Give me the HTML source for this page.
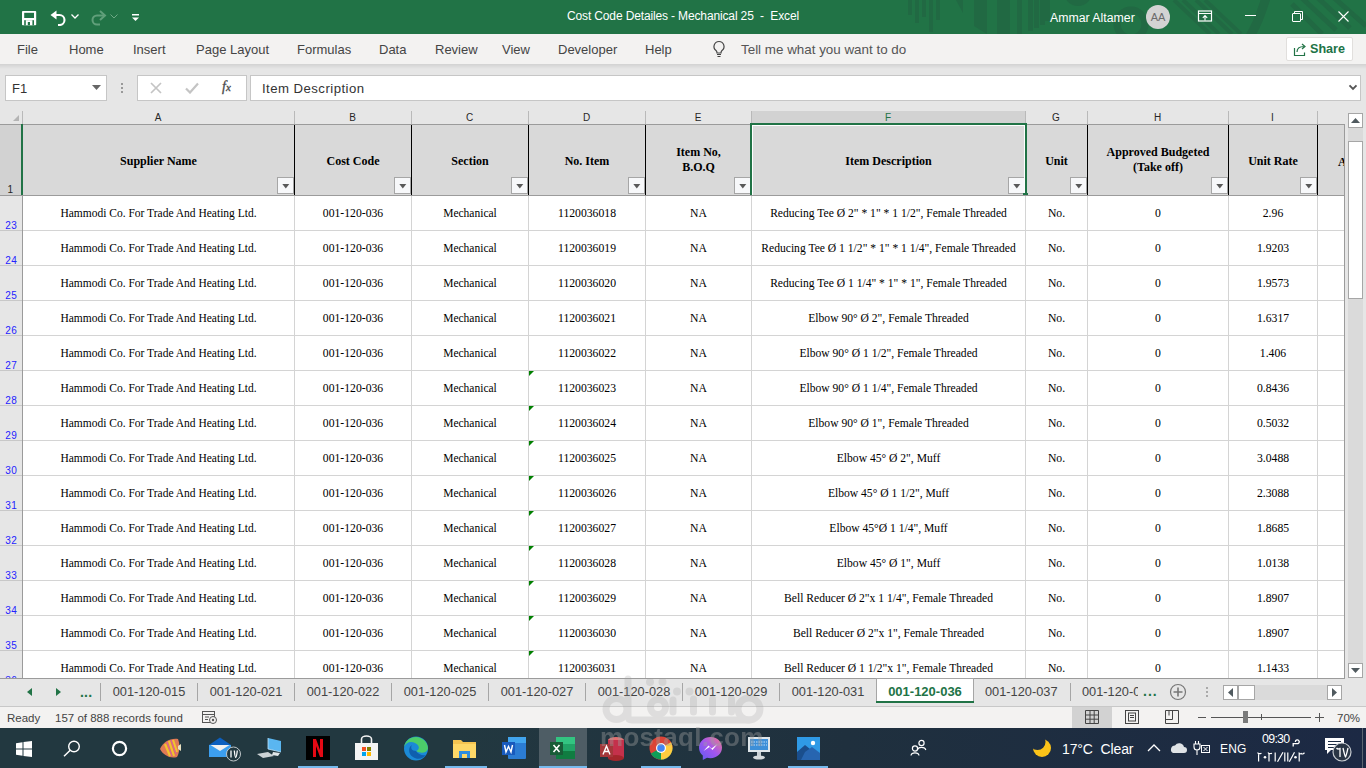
<!DOCTYPE html>
<html><head><meta charset="utf-8"><title>Excel</title>
<style>
*{box-sizing:border-box;margin:0;padding:0}
html,body{width:1366px;height:768px;overflow:hidden;background:#fff}
body{position:relative;font-family:"Liberation Sans",sans-serif;}
.a{position:absolute}
.t{position:absolute;white-space:nowrap}
.serif{font-family:"Liberation Serif",serif}
</style></head><body>
<div class="a" style="left:0;top:0;width:1366px;height:34px;background:#217346;overflow:hidden"><svg class="a" style="left:0;top:0" width="1366" height="34" viewBox="0 0 1366 34">
<g fill="#216943">
<rect x="908" y="0" width="4" height="15"/><rect x="915" y="0" width="4" height="23"/><rect x="922" y="0" width="4" height="17"/><rect x="929" y="0" width="4" height="32"/><rect x="936" y="0" width="4" height="20"/>
<path d="M956 0H963V13z"/>
<path d="M974 0H987V34L974 26z"/>
<rect x="997" y="0" width="13" height="34"/>
<rect x="1017" y="0" width="5" height="34"/><rect x="1028" y="0" width="5" height="31"/><rect x="1034" y="0" width="5" height="28"/><rect x="1040" y="0" width="5" height="25"/><rect x="1045" y="0" width="5" height="21"/>
<circle cx="1078" cy="-8" r="14"/>
</g>
<g fill="none" stroke="#216943">
<circle cx="1131" cy="24" r="14" stroke-width="7"/>
<path d="M1174 0 L1210 34 M1183 0 L1219 34 M1196 0 L1232 34 M1205 0 L1241 34" stroke-width="4"/>
<path d="M1266 -2 C1262 10 1258 24 1250 36" stroke-width="9"/>
<path d="M1292 4 L1322 34 M1302 -2 L1336 30 M1316 -4 L1350 28 M1332 -4 L1366 26" stroke-width="5"/>
</g>
</svg><svg class="a" style="left:22px;top:11px" width="15" height="15" viewBox="0 0 15 15">
<rect x="0" y="0" width="14.2" height="14.2" rx="0.8" fill="#fff"/>
<rect x="2.2" y="1.8" width="9.8" height="5.2" fill="#217346"/>
<rect x="2.2" y="9.2" width="9.8" height="5" fill="#217346"/>
<rect x="3.8" y="9.2" width="6.6" height="5" fill="#fff"/>
<rect x="5.8" y="11" width="2.2" height="3.2" fill="#217346"/>
</svg><svg class="a" style="left:50px;top:10px" width="17" height="16" viewBox="0 0 17 16">
<path d="M0.5 5 L6.5 0.5 V9.5z" fill="#fff"/>
<path d="M4 5 H9.5 a5 5 0 0 1 0 10 H8" fill="none" stroke="#fff" stroke-width="2.1"/>
</svg><svg class="a" style="left:71px;top:14px" width="8" height="5" viewBox="0 0 8 5"><path d="M0.5 0.5 L4 4 L7.5 0.5" fill="none" stroke="#fff" stroke-width="1.3"/></svg><svg class="a" style="left:89px;top:9px" width="18" height="17" viewBox="0 0 18 17">
<path d="M11 2 L16 6.5 L11 11" fill="none" stroke="#609f7a" stroke-width="2"/>
<path d="M15.5 6.5 H8 a4.5 4.5 0 0 0 0 9 H11" fill="none" stroke="#609f7a" stroke-width="2"/>
</svg><svg class="a" style="left:110px;top:14px" width="8" height="5" viewBox="0 0 8 5"><path d="M0.5 0.5 L4 4 L7.5 0.5" fill="none" stroke="#6ea985" stroke-width="1"/></svg><svg class="a" style="left:131px;top:13px" width="9" height="9" viewBox="0 0 9 9"><rect x="1" y="1" width="7" height="1.5" fill="#fff"/><path d="M1 4.5 H8 L4.5 8z" fill="#fff"/></svg><div class="t" style="left:567px;top:9px;font-size:12px;color:#fff;letter-spacing:-0.14px">Cost Code Detailes - Mechanical 25 &nbsp;- &nbsp;Excel</div><div class="t" style="left:1050px;top:11px;font-size:12.3px;color:#fff">Ammar Altamer</div><div class="a" style="left:1146px;top:5px;width:24px;height:24px;border-radius:50%;background:#d3d3d3"></div><div class="t" style="left:1146px;top:11px;width:24px;text-align:center;font-size:11px;color:#6b6b6b">AA</div><svg class="a" style="left:1197px;top:10px" width="16" height="12" viewBox="0 0 16 12">
<rect x="1.5" y="1" width="13" height="10" fill="none" stroke="#fff" stroke-width="1.2"/>
<path d="M1.5 3.5h13" stroke="#fff" stroke-width="1"/>
<path d="M8 10.5V5.5 M5.8 7.8 L8 5.5 L10.2 7.8" fill="none" stroke="#fff" stroke-width="1.1"/>
</svg><div class="a" style="left:1245px;top:15px;width:11px;height:1px;background:#fff"></div><svg class="a" style="left:1292px;top:11px" width="11" height="11" viewBox="0 0 11 11">
<rect x="0.5" y="2.5" width="8" height="8" rx="0.5" fill="none" stroke="#fff" stroke-width="1"/>
<path d="M2.5 2.5V0.5h8v8h-2" fill="none" stroke="#fff" stroke-width="1"/>
</svg><svg class="a" style="left:1338px;top:11px" width="11" height="11" viewBox="0 0 11 11"><path d="M0.5 0.5L10.5 10.5M10.5 0.5L0.5 10.5" stroke="#fff" stroke-width="1.1"/></svg></div><div class="a" style="left:0;top:34px;width:1366px;height:30px;background:#f3f2f1"></div><div class="t" style="left:17px;top:42px;font-size:13px;color:#444">File</div><div class="t" style="left:69px;top:42px;font-size:13px;color:#444">Home</div><div class="t" style="left:133px;top:42px;font-size:13px;color:#444">Insert</div><div class="t" style="left:196px;top:42px;font-size:13px;color:#444">Page Layout</div><div class="t" style="left:297px;top:42px;font-size:13px;color:#444">Formulas</div><div class="t" style="left:379px;top:42px;font-size:13px;color:#444">Data</div><div class="t" style="left:435px;top:42px;font-size:13px;color:#444">Review</div><div class="t" style="left:502px;top:42px;font-size:13px;color:#444">View</div><div class="t" style="left:558px;top:42px;font-size:13px;color:#444">Developer</div><div class="t" style="left:645px;top:42px;font-size:13px;color:#444">Help</div><svg class="a" style="left:711px;top:40px" width="16" height="18" viewBox="0 0 16 18">
<path d="M8 1.5a5 5 0 0 0-3 9c.8.7 1 1.5 1 2.5h4c0-1 .2-1.8 1-2.5a5 5 0 0 0-3-9z" fill="none" stroke="#444" stroke-width="1.2"/>
<path d="M6 14.5h4M6.5 16.5h3" stroke="#444" stroke-width="1.2"/>
</svg><div class="t" style="left:741px;top:42px;font-size:13.4px;color:#555">Tell me what you want to do</div><div class="a" style="left:1286px;top:37px;width:67px;height:24px;background:#fff;border:1px solid #e1dfdd;border-radius:2px"></div><svg class="a" style="left:1293px;top:42px" width="15" height="15" viewBox="0 0 15 15">
<path d="M1.5 6v7.5h10v-3" fill="none" stroke="#217346" stroke-width="1.2"/>
<path d="M4 10c0-4 3-5.5 7-5.5M9 2l3 2.5-3 2.5" fill="none" stroke="#217346" stroke-width="1.2"/>
</svg><div class="t" style="left:1310px;top:42px;font-size:12.6px;font-weight:bold;color:#217346">Share</div><div class="a" style="left:0;top:64px;width:1366px;height:47px;background:#e6e6e6"></div><div class="a" style="left:0;top:64px;width:1366px;height:5px;background:linear-gradient(#d2d2d2,#e6e6e6)"></div><div class="a" style="left:5px;top:75px;width:102px;height:26px;background:#fff;border:1px solid #c6c6c6"></div><div class="t" style="left:12px;top:81px;font-size:13px;color:#333">F1</div><svg class="a" style="left:92px;top:85px" width="9" height="5" viewBox="0 0 9 5"><path d="M0 0h9L4.5 5z" fill="#666"/></svg><div class="a" style="left:121px;top:83px;width:2px;height:2px;background:#999"></div><div class="a" style="left:121px;top:87px;width:2px;height:2px;background:#999"></div><div class="a" style="left:121px;top:91px;width:2px;height:2px;background:#999"></div><div class="a" style="left:137px;top:75px;width:110px;height:26px;background:#fff;border:1px solid #c6c6c6"></div><svg class="a" style="left:150px;top:82px" width="12" height="12" viewBox="0 0 12 12"><path d="M1 1L11 11M11 1L1 11" stroke="#c4c4c4" stroke-width="1.7"/></svg><svg class="a" style="left:185px;top:82px" width="14" height="12" viewBox="0 0 14 12"><path d="M1 6.5L5 10.5L13 1.5" fill="none" stroke="#c4c4c4" stroke-width="2.2"/></svg><div class="t serif" style="left:222px;top:79px;font-size:14px;font-style:italic;color:#4a4a4a;-webkit-text-stroke:0.3px #4a4a4a">f<span style="font-size:11px">x</span></div><div class="a" style="left:250px;top:75px;width:1111px;height:26px;background:#fff;border:1px solid #c6c6c6"></div><div class="t" style="left:262px;top:81px;font-size:13.2px;letter-spacing:0.45px;color:#333">Item Description</div><svg class="a" style="left:1348px;top:84px" width="10" height="7" viewBox="0 0 10 7"><path d="M1.5 1.3L5 4.8L8.5 1.3" fill="none" stroke="#555" stroke-width="1.9"/></svg><div class="a" style="left:0;top:111px;width:1345px;height:13px;background:#e6e6e6"></div><div class="a" style="left:752px;top:111px;width:273px;height:13px;background:#d2d2d2"></div><svg class="a" style="left:13px;top:115px" width="7" height="7" viewBox="0 0 7 7"><path d="M6 0V6H0z" fill="#b4b4b4"/></svg><div class="t" style="left:22px;top:111px;width:272px;text-align:center;font-size:10px;line-height:13px;color:#262626">A</div><div class="t" style="left:294px;top:111px;width:117px;text-align:center;font-size:10px;line-height:13px;color:#262626">B</div><div class="t" style="left:411px;top:111px;width:117px;text-align:center;font-size:10px;line-height:13px;color:#262626">C</div><div class="t" style="left:528px;top:111px;width:117px;text-align:center;font-size:10px;line-height:13px;color:#262626">D</div><div class="t" style="left:645px;top:111px;width:106px;text-align:center;font-size:10px;line-height:13px;color:#262626">E</div><div class="t" style="left:751px;top:111px;width:274px;text-align:center;font-size:10px;line-height:13px;color:#217346">F</div><div class="t" style="left:1025px;top:111px;width:62px;text-align:center;font-size:10px;line-height:13px;color:#262626">G</div><div class="t" style="left:1087px;top:111px;width:141px;text-align:center;font-size:10px;line-height:13px;color:#262626">H</div><div class="t" style="left:1228px;top:111px;width:89px;text-align:center;font-size:10px;line-height:13px;color:#262626">I</div><div class="t" style="left:1317px;top:111px;width:27px;text-align:center;font-size:10px;line-height:13px;color:#262626"></div><div class="a" style="left:22px;top:111px;width:1px;height:13px;background:#b9b9b9"></div><div class="a" style="left:294px;top:111px;width:1px;height:13px;background:#b9b9b9"></div><div class="a" style="left:411px;top:111px;width:1px;height:13px;background:#b9b9b9"></div><div class="a" style="left:528px;top:111px;width:1px;height:13px;background:#b9b9b9"></div><div class="a" style="left:645px;top:111px;width:1px;height:13px;background:#b9b9b9"></div><div class="a" style="left:751px;top:111px;width:1px;height:13px;background:#b9b9b9"></div><div class="a" style="left:1025px;top:111px;width:1px;height:13px;background:#b9b9b9"></div><div class="a" style="left:1087px;top:111px;width:1px;height:13px;background:#b9b9b9"></div><div class="a" style="left:1228px;top:111px;width:1px;height:13px;background:#b9b9b9"></div><div class="a" style="left:1317px;top:111px;width:1px;height:13px;background:#b9b9b9"></div><div class="a" style="left:0;top:124px;width:1345px;height:1px;background:#9b9b9b"></div><div class="a" style="left:0;top:125px;width:22px;height:553px;background:#e6e6e6"></div><div class="a" style="left:0;top:125px;width:21px;height:70px;background:#d2d2d2"></div><div class="a" style="left:22px;top:125px;width:1px;height:553px;background:#9b9b9b"></div><div class="a" style="left:21px;top:124px;width:2px;height:71px;background:#217346"></div><div class="t" style="left:0;top:184px;width:13px;text-align:right;font-size:10px;color:#262626">1</div><div class="a" style="left:0;top:230px;width:22px;height:1px;background:#c8c8c8"></div><div class="t" style="left:0;top:220px;width:17px;text-align:right;font-size:10px;letter-spacing:0.3px;color:#2323ff;line-height:12px">23</div><div class="a" style="left:0;top:265px;width:22px;height:1px;background:#c8c8c8"></div><div class="t" style="left:0;top:255px;width:17px;text-align:right;font-size:10px;letter-spacing:0.3px;color:#2323ff;line-height:12px">24</div><div class="a" style="left:0;top:300px;width:22px;height:1px;background:#c8c8c8"></div><div class="t" style="left:0;top:290px;width:17px;text-align:right;font-size:10px;letter-spacing:0.3px;color:#2323ff;line-height:12px">25</div><div class="a" style="left:0;top:335px;width:22px;height:1px;background:#c8c8c8"></div><div class="t" style="left:0;top:325px;width:17px;text-align:right;font-size:10px;letter-spacing:0.3px;color:#2323ff;line-height:12px">26</div><div class="a" style="left:0;top:370px;width:22px;height:1px;background:#c8c8c8"></div><div class="t" style="left:0;top:360px;width:17px;text-align:right;font-size:10px;letter-spacing:0.3px;color:#2323ff;line-height:12px">27</div><div class="a" style="left:0;top:405px;width:22px;height:1px;background:#c8c8c8"></div><div class="t" style="left:0;top:395px;width:17px;text-align:right;font-size:10px;letter-spacing:0.3px;color:#2323ff;line-height:12px">28</div><div class="a" style="left:0;top:440px;width:22px;height:1px;background:#c8c8c8"></div><div class="t" style="left:0;top:430px;width:17px;text-align:right;font-size:10px;letter-spacing:0.3px;color:#2323ff;line-height:12px">29</div><div class="a" style="left:0;top:475px;width:22px;height:1px;background:#c8c8c8"></div><div class="t" style="left:0;top:465px;width:17px;text-align:right;font-size:10px;letter-spacing:0.3px;color:#2323ff;line-height:12px">30</div><div class="a" style="left:0;top:510px;width:22px;height:1px;background:#c8c8c8"></div><div class="t" style="left:0;top:500px;width:17px;text-align:right;font-size:10px;letter-spacing:0.3px;color:#2323ff;line-height:12px">31</div><div class="a" style="left:0;top:545px;width:22px;height:1px;background:#c8c8c8"></div><div class="t" style="left:0;top:535px;width:17px;text-align:right;font-size:10px;letter-spacing:0.3px;color:#2323ff;line-height:12px">32</div><div class="a" style="left:0;top:580px;width:22px;height:1px;background:#c8c8c8"></div><div class="t" style="left:0;top:570px;width:17px;text-align:right;font-size:10px;letter-spacing:0.3px;color:#2323ff;line-height:12px">33</div><div class="a" style="left:0;top:615px;width:22px;height:1px;background:#c8c8c8"></div><div class="t" style="left:0;top:605px;width:17px;text-align:right;font-size:10px;letter-spacing:0.3px;color:#2323ff;line-height:12px">34</div><div class="a" style="left:0;top:650px;width:22px;height:1px;background:#c8c8c8"></div><div class="t" style="left:0;top:640px;width:17px;text-align:right;font-size:10px;letter-spacing:0.3px;color:#2323ff;line-height:12px">35</div><div class="a" style="left:0;top:685px;width:22px;height:1px;background:#c8c8c8"></div><div class="t" style="left:0;top:675px;width:17px;text-align:right;font-size:10px;letter-spacing:0.3px;color:#2323ff;line-height:12px">36</div><div class="a" style="left:23px;top:125px;width:1321px;height:70px;background:#d9d9d9"></div><div class="t serif" style="left:23px;top:154px;width:271px;text-align:center;font-size:12px;font-weight:bold;color:#000;line-height:15px">Supplier Name</div><div class="a" style="left:277px;top:177px;width:17px;height:17px;background:#f7f8fa;border:1px solid #a6a6a6"></div><svg class="a" style="left:282px;top:184px" width="8" height="5" viewBox="0 0 8 5"><path d="M0.3 0H7.3L3.8 4.5z" fill="#595959"/></svg><div class="t serif" style="left:295px;top:154px;width:116px;text-align:center;font-size:12px;font-weight:bold;color:#000;line-height:15px">Cost Code</div><div class="a" style="left:394px;top:177px;width:17px;height:17px;background:#f7f8fa;border:1px solid #a6a6a6"></div><svg class="a" style="left:399px;top:184px" width="8" height="5" viewBox="0 0 8 5"><path d="M0.3 0H7.3L3.8 4.5z" fill="#595959"/></svg><div class="t serif" style="left:412px;top:154px;width:116px;text-align:center;font-size:12px;font-weight:bold;color:#000;line-height:15px">Section</div><div class="a" style="left:511px;top:177px;width:17px;height:17px;background:#f7f8fa;border:1px solid #a6a6a6"></div><svg class="a" style="left:516px;top:184px" width="8" height="5" viewBox="0 0 8 5"><path d="M0.3 0H7.3L3.8 4.5z" fill="#595959"/></svg><div class="t serif" style="left:529px;top:154px;width:116px;text-align:center;font-size:12px;font-weight:bold;color:#000;line-height:15px">No. Item</div><div class="a" style="left:628px;top:177px;width:17px;height:17px;background:#f7f8fa;border:1px solid #a6a6a6"></div><svg class="a" style="left:633px;top:184px" width="8" height="5" viewBox="0 0 8 5"><path d="M0.3 0H7.3L3.8 4.5z" fill="#595959"/></svg><div class="t serif" style="left:646px;top:145px;width:105px;text-align:center;font-size:12px;font-weight:bold;color:#000;line-height:15px">Item No,<br>B.O.Q</div><div class="a" style="left:734px;top:177px;width:17px;height:17px;background:#f7f8fa;border:1px solid #a6a6a6"></div><svg class="a" style="left:739px;top:184px" width="8" height="5" viewBox="0 0 8 5"><path d="M0.3 0H7.3L3.8 4.5z" fill="#595959"/></svg><div class="t serif" style="left:752px;top:154px;width:273px;text-align:center;font-size:12px;font-weight:bold;color:#000;line-height:15px">Item Description</div><div class="a" style="left:1008px;top:177px;width:17px;height:17px;background:#f7f8fa;border:1px solid #a6a6a6"></div><svg class="a" style="left:1013px;top:184px" width="8" height="5" viewBox="0 0 8 5"><path d="M0.3 0H7.3L3.8 4.5z" fill="#595959"/></svg><div class="t serif" style="left:1026px;top:154px;width:61px;text-align:center;font-size:12px;font-weight:bold;color:#000;line-height:15px">Unit</div><div class="a" style="left:1070px;top:177px;width:17px;height:17px;background:#f7f8fa;border:1px solid #a6a6a6"></div><svg class="a" style="left:1075px;top:184px" width="8" height="5" viewBox="0 0 8 5"><path d="M0.3 0H7.3L3.8 4.5z" fill="#595959"/></svg><div class="t serif" style="left:1088px;top:145px;width:140px;text-align:center;font-size:12px;font-weight:bold;color:#000;line-height:15px">Approved Budgeted<br>(Take off)</div><div class="a" style="left:1211px;top:177px;width:17px;height:17px;background:#f7f8fa;border:1px solid #a6a6a6"></div><svg class="a" style="left:1216px;top:184px" width="8" height="5" viewBox="0 0 8 5"><path d="M0.3 0H7.3L3.8 4.5z" fill="#595959"/></svg><div class="t serif" style="left:1229px;top:154px;width:88px;text-align:center;font-size:12px;font-weight:bold;color:#000;line-height:15px">Unit Rate</div><div class="a" style="left:1300px;top:177px;width:17px;height:17px;background:#f7f8fa;border:1px solid #a6a6a6"></div><svg class="a" style="left:1305px;top:184px" width="8" height="5" viewBox="0 0 8 5"><path d="M0.3 0H7.3L3.8 4.5z" fill="#595959"/></svg><div class="t serif" style="left:1338px;top:155px;font-size:12px;font-weight:bold;color:#000;line-height:15px">A</div><div class="a" style="left:294px;top:125px;width:1px;height:70px;background:#000"></div><div class="a" style="left:411px;top:125px;width:1px;height:70px;background:#000"></div><div class="a" style="left:528px;top:125px;width:1px;height:70px;background:#000"></div><div class="a" style="left:645px;top:125px;width:1px;height:70px;background:#000"></div><div class="a" style="left:751px;top:125px;width:1px;height:70px;background:#000"></div><div class="a" style="left:1025px;top:125px;width:1px;height:70px;background:#000"></div><div class="a" style="left:1087px;top:125px;width:1px;height:70px;background:#000"></div><div class="a" style="left:1228px;top:125px;width:1px;height:70px;background:#000"></div><div class="a" style="left:1317px;top:125px;width:1px;height:70px;background:#000"></div><div class="a" style="left:1344px;top:124px;width:1px;height:555px;background:#9b9b9b"></div><div class="a" style="left:0;top:195px;width:1345px;height:1px;background:#9b9b9b"></div><div class="a" style="left:23px;top:196px;width:1321px;height:482px;background:#fff"></div><div class="a" style="left:23px;top:230px;width:1321px;height:1px;background:#d4d4d4"></div><div class="a" style="left:23px;top:265px;width:1321px;height:1px;background:#d4d4d4"></div><div class="a" style="left:23px;top:300px;width:1321px;height:1px;background:#d4d4d4"></div><div class="a" style="left:23px;top:335px;width:1321px;height:1px;background:#d4d4d4"></div><div class="a" style="left:23px;top:370px;width:1321px;height:1px;background:#d4d4d4"></div><div class="a" style="left:23px;top:405px;width:1321px;height:1px;background:#d4d4d4"></div><div class="a" style="left:23px;top:440px;width:1321px;height:1px;background:#d4d4d4"></div><div class="a" style="left:23px;top:475px;width:1321px;height:1px;background:#d4d4d4"></div><div class="a" style="left:23px;top:510px;width:1321px;height:1px;background:#d4d4d4"></div><div class="a" style="left:23px;top:545px;width:1321px;height:1px;background:#d4d4d4"></div><div class="a" style="left:23px;top:580px;width:1321px;height:1px;background:#d4d4d4"></div><div class="a" style="left:23px;top:615px;width:1321px;height:1px;background:#d4d4d4"></div><div class="a" style="left:23px;top:650px;width:1321px;height:1px;background:#d4d4d4"></div><div class="a" style="left:23px;top:685px;width:1321px;height:1px;background:#d4d4d4"></div><div class="a" style="left:294px;top:196px;width:1px;height:482px;background:#d4d4d4"></div><div class="a" style="left:411px;top:196px;width:1px;height:482px;background:#d4d4d4"></div><div class="a" style="left:528px;top:196px;width:1px;height:482px;background:#d4d4d4"></div><div class="a" style="left:645px;top:196px;width:1px;height:482px;background:#d4d4d4"></div><div class="a" style="left:751px;top:196px;width:1px;height:482px;background:#d4d4d4"></div><div class="a" style="left:1025px;top:196px;width:1px;height:482px;background:#d4d4d4"></div><div class="a" style="left:1087px;top:196px;width:1px;height:482px;background:#d4d4d4"></div><div class="a" style="left:1228px;top:196px;width:1px;height:482px;background:#d4d4d4"></div><div class="a" style="left:1317px;top:196px;width:1px;height:482px;background:#d4d4d4"></div><div class="t serif" style="left:23px;top:206px;width:271px;text-align:center;font-size:11.5px;color:#000;line-height:15px">Hammodi Co. For Trade And Heating Ltd.</div><div class="t serif" style="left:295px;top:206px;width:116px;text-align:center;font-size:11.7px;color:#000;line-height:15px">001-120-036</div><div class="t serif" style="left:412px;top:206px;width:116px;text-align:center;font-size:11.5px;color:#000;line-height:15px">Mechanical</div><div class="t serif" style="left:529px;top:206px;width:116px;text-align:center;font-size:11.7px;color:#000;line-height:15px">1120036018</div><div class="t serif" style="left:646px;top:206px;width:105px;text-align:center;font-size:11.7px;color:#000;line-height:15px">NA</div><div class="t serif" style="left:752px;top:206px;width:273px;text-align:center;font-size:11.6px;color:#000;line-height:15px">Reducing Tee Ø 2&quot; * 1&quot; * 1 1/2&quot;, Female Threaded</div><div class="t serif" style="left:1026px;top:206px;width:61px;text-align:center;font-size:11.7px;color:#000;line-height:15px">No.</div><div class="t serif" style="left:1088px;top:206px;width:140px;text-align:center;font-size:11.7px;color:#000;line-height:15px">0</div><div class="t serif" style="left:1229px;top:206px;width:88px;text-align:center;font-size:11.7px;color:#000;line-height:15px">2.96</div><div class="t serif" style="left:23px;top:241px;width:271px;text-align:center;font-size:11.5px;color:#000;line-height:15px">Hammodi Co. For Trade And Heating Ltd.</div><div class="t serif" style="left:295px;top:241px;width:116px;text-align:center;font-size:11.7px;color:#000;line-height:15px">001-120-036</div><div class="t serif" style="left:412px;top:241px;width:116px;text-align:center;font-size:11.5px;color:#000;line-height:15px">Mechanical</div><div class="t serif" style="left:529px;top:241px;width:116px;text-align:center;font-size:11.7px;color:#000;line-height:15px">1120036019</div><div class="t serif" style="left:646px;top:241px;width:105px;text-align:center;font-size:11.7px;color:#000;line-height:15px">NA</div><div class="t serif" style="left:752px;top:241px;width:273px;text-align:center;font-size:11.6px;color:#000;line-height:15px">Reducing Tee Ø 1 1/2&quot; * 1&quot; * 1 1/4&quot;, Female Threaded</div><div class="t serif" style="left:1026px;top:241px;width:61px;text-align:center;font-size:11.7px;color:#000;line-height:15px">No.</div><div class="t serif" style="left:1088px;top:241px;width:140px;text-align:center;font-size:11.7px;color:#000;line-height:15px">0</div><div class="t serif" style="left:1229px;top:241px;width:88px;text-align:center;font-size:11.7px;color:#000;line-height:15px">1.9203</div><div class="t serif" style="left:23px;top:276px;width:271px;text-align:center;font-size:11.5px;color:#000;line-height:15px">Hammodi Co. For Trade And Heating Ltd.</div><div class="t serif" style="left:295px;top:276px;width:116px;text-align:center;font-size:11.7px;color:#000;line-height:15px">001-120-036</div><div class="t serif" style="left:412px;top:276px;width:116px;text-align:center;font-size:11.5px;color:#000;line-height:15px">Mechanical</div><div class="t serif" style="left:529px;top:276px;width:116px;text-align:center;font-size:11.7px;color:#000;line-height:15px">1120036020</div><div class="t serif" style="left:646px;top:276px;width:105px;text-align:center;font-size:11.7px;color:#000;line-height:15px">NA</div><div class="t serif" style="left:752px;top:276px;width:273px;text-align:center;font-size:11.6px;color:#000;line-height:15px">Reducing Tee Ø 1 1/4&quot; * 1&quot; * 1&quot;, Female Threaded</div><div class="t serif" style="left:1026px;top:276px;width:61px;text-align:center;font-size:11.7px;color:#000;line-height:15px">No.</div><div class="t serif" style="left:1088px;top:276px;width:140px;text-align:center;font-size:11.7px;color:#000;line-height:15px">0</div><div class="t serif" style="left:1229px;top:276px;width:88px;text-align:center;font-size:11.7px;color:#000;line-height:15px">1.9573</div><div class="t serif" style="left:23px;top:311px;width:271px;text-align:center;font-size:11.5px;color:#000;line-height:15px">Hammodi Co. For Trade And Heating Ltd.</div><div class="t serif" style="left:295px;top:311px;width:116px;text-align:center;font-size:11.7px;color:#000;line-height:15px">001-120-036</div><div class="t serif" style="left:412px;top:311px;width:116px;text-align:center;font-size:11.5px;color:#000;line-height:15px">Mechanical</div><div class="t serif" style="left:529px;top:311px;width:116px;text-align:center;font-size:11.7px;color:#000;line-height:15px">1120036021</div><div class="t serif" style="left:646px;top:311px;width:105px;text-align:center;font-size:11.7px;color:#000;line-height:15px">NA</div><div class="t serif" style="left:752px;top:311px;width:273px;text-align:center;font-size:11.6px;color:#000;line-height:15px">Elbow 90° Ø 2&quot;, Female Threaded</div><div class="t serif" style="left:1026px;top:311px;width:61px;text-align:center;font-size:11.7px;color:#000;line-height:15px">No.</div><div class="t serif" style="left:1088px;top:311px;width:140px;text-align:center;font-size:11.7px;color:#000;line-height:15px">0</div><div class="t serif" style="left:1229px;top:311px;width:88px;text-align:center;font-size:11.7px;color:#000;line-height:15px">1.6317</div><div class="t serif" style="left:23px;top:346px;width:271px;text-align:center;font-size:11.5px;color:#000;line-height:15px">Hammodi Co. For Trade And Heating Ltd.</div><div class="t serif" style="left:295px;top:346px;width:116px;text-align:center;font-size:11.7px;color:#000;line-height:15px">001-120-036</div><div class="t serif" style="left:412px;top:346px;width:116px;text-align:center;font-size:11.5px;color:#000;line-height:15px">Mechanical</div><div class="t serif" style="left:529px;top:346px;width:116px;text-align:center;font-size:11.7px;color:#000;line-height:15px">1120036022</div><div class="t serif" style="left:646px;top:346px;width:105px;text-align:center;font-size:11.7px;color:#000;line-height:15px">NA</div><div class="t serif" style="left:752px;top:346px;width:273px;text-align:center;font-size:11.6px;color:#000;line-height:15px">Elbow 90° Ø 1 1/2&quot;, Female Threaded</div><div class="t serif" style="left:1026px;top:346px;width:61px;text-align:center;font-size:11.7px;color:#000;line-height:15px">No.</div><div class="t serif" style="left:1088px;top:346px;width:140px;text-align:center;font-size:11.7px;color:#000;line-height:15px">0</div><div class="t serif" style="left:1229px;top:346px;width:88px;text-align:center;font-size:11.7px;color:#000;line-height:15px">1.406</div><div class="t serif" style="left:23px;top:381px;width:271px;text-align:center;font-size:11.5px;color:#000;line-height:15px">Hammodi Co. For Trade And Heating Ltd.</div><div class="t serif" style="left:295px;top:381px;width:116px;text-align:center;font-size:11.7px;color:#000;line-height:15px">001-120-036</div><div class="t serif" style="left:412px;top:381px;width:116px;text-align:center;font-size:11.5px;color:#000;line-height:15px">Mechanical</div><div class="t serif" style="left:529px;top:381px;width:116px;text-align:center;font-size:11.7px;color:#000;line-height:15px">1120036023</div><div class="t serif" style="left:646px;top:381px;width:105px;text-align:center;font-size:11.7px;color:#000;line-height:15px">NA</div><div class="t serif" style="left:752px;top:381px;width:273px;text-align:center;font-size:11.6px;color:#000;line-height:15px">Elbow 90° Ø 1 1/4&quot;, Female Threaded</div><div class="t serif" style="left:1026px;top:381px;width:61px;text-align:center;font-size:11.7px;color:#000;line-height:15px">No.</div><div class="t serif" style="left:1088px;top:381px;width:140px;text-align:center;font-size:11.7px;color:#000;line-height:15px">0</div><div class="t serif" style="left:1229px;top:381px;width:88px;text-align:center;font-size:11.7px;color:#000;line-height:15px">0.8436</div><svg class="a" style="left:529px;top:371px" width="5" height="5" viewBox="0 0 5 5"><path d="M0 0H5L0 5z" fill="#008000"/></svg><div class="t serif" style="left:23px;top:416px;width:271px;text-align:center;font-size:11.5px;color:#000;line-height:15px">Hammodi Co. For Trade And Heating Ltd.</div><div class="t serif" style="left:295px;top:416px;width:116px;text-align:center;font-size:11.7px;color:#000;line-height:15px">001-120-036</div><div class="t serif" style="left:412px;top:416px;width:116px;text-align:center;font-size:11.5px;color:#000;line-height:15px">Mechanical</div><div class="t serif" style="left:529px;top:416px;width:116px;text-align:center;font-size:11.7px;color:#000;line-height:15px">1120036024</div><div class="t serif" style="left:646px;top:416px;width:105px;text-align:center;font-size:11.7px;color:#000;line-height:15px">NA</div><div class="t serif" style="left:752px;top:416px;width:273px;text-align:center;font-size:11.6px;color:#000;line-height:15px">Elbow 90° Ø 1&quot;, Female Threaded</div><div class="t serif" style="left:1026px;top:416px;width:61px;text-align:center;font-size:11.7px;color:#000;line-height:15px">No.</div><div class="t serif" style="left:1088px;top:416px;width:140px;text-align:center;font-size:11.7px;color:#000;line-height:15px">0</div><div class="t serif" style="left:1229px;top:416px;width:88px;text-align:center;font-size:11.7px;color:#000;line-height:15px">0.5032</div><svg class="a" style="left:529px;top:406px" width="5" height="5" viewBox="0 0 5 5"><path d="M0 0H5L0 5z" fill="#008000"/></svg><div class="t serif" style="left:23px;top:451px;width:271px;text-align:center;font-size:11.5px;color:#000;line-height:15px">Hammodi Co. For Trade And Heating Ltd.</div><div class="t serif" style="left:295px;top:451px;width:116px;text-align:center;font-size:11.7px;color:#000;line-height:15px">001-120-036</div><div class="t serif" style="left:412px;top:451px;width:116px;text-align:center;font-size:11.5px;color:#000;line-height:15px">Mechanical</div><div class="t serif" style="left:529px;top:451px;width:116px;text-align:center;font-size:11.7px;color:#000;line-height:15px">1120036025</div><div class="t serif" style="left:646px;top:451px;width:105px;text-align:center;font-size:11.7px;color:#000;line-height:15px">NA</div><div class="t serif" style="left:752px;top:451px;width:273px;text-align:center;font-size:11.6px;color:#000;line-height:15px">Elbow 45° Ø 2&quot;, Muff</div><div class="t serif" style="left:1026px;top:451px;width:61px;text-align:center;font-size:11.7px;color:#000;line-height:15px">No.</div><div class="t serif" style="left:1088px;top:451px;width:140px;text-align:center;font-size:11.7px;color:#000;line-height:15px">0</div><div class="t serif" style="left:1229px;top:451px;width:88px;text-align:center;font-size:11.7px;color:#000;line-height:15px">3.0488</div><svg class="a" style="left:529px;top:441px" width="5" height="5" viewBox="0 0 5 5"><path d="M0 0H5L0 5z" fill="#008000"/></svg><div class="t serif" style="left:23px;top:486px;width:271px;text-align:center;font-size:11.5px;color:#000;line-height:15px">Hammodi Co. For Trade And Heating Ltd.</div><div class="t serif" style="left:295px;top:486px;width:116px;text-align:center;font-size:11.7px;color:#000;line-height:15px">001-120-036</div><div class="t serif" style="left:412px;top:486px;width:116px;text-align:center;font-size:11.5px;color:#000;line-height:15px">Mechanical</div><div class="t serif" style="left:529px;top:486px;width:116px;text-align:center;font-size:11.7px;color:#000;line-height:15px">1120036026</div><div class="t serif" style="left:646px;top:486px;width:105px;text-align:center;font-size:11.7px;color:#000;line-height:15px">NA</div><div class="t serif" style="left:752px;top:486px;width:273px;text-align:center;font-size:11.6px;color:#000;line-height:15px">Elbow 45° Ø 1 1/2&quot;, Muff</div><div class="t serif" style="left:1026px;top:486px;width:61px;text-align:center;font-size:11.7px;color:#000;line-height:15px">No.</div><div class="t serif" style="left:1088px;top:486px;width:140px;text-align:center;font-size:11.7px;color:#000;line-height:15px">0</div><div class="t serif" style="left:1229px;top:486px;width:88px;text-align:center;font-size:11.7px;color:#000;line-height:15px">2.3088</div><svg class="a" style="left:529px;top:476px" width="5" height="5" viewBox="0 0 5 5"><path d="M0 0H5L0 5z" fill="#008000"/></svg><div class="t serif" style="left:23px;top:521px;width:271px;text-align:center;font-size:11.5px;color:#000;line-height:15px">Hammodi Co. For Trade And Heating Ltd.</div><div class="t serif" style="left:295px;top:521px;width:116px;text-align:center;font-size:11.7px;color:#000;line-height:15px">001-120-036</div><div class="t serif" style="left:412px;top:521px;width:116px;text-align:center;font-size:11.5px;color:#000;line-height:15px">Mechanical</div><div class="t serif" style="left:529px;top:521px;width:116px;text-align:center;font-size:11.7px;color:#000;line-height:15px">1120036027</div><div class="t serif" style="left:646px;top:521px;width:105px;text-align:center;font-size:11.7px;color:#000;line-height:15px">NA</div><div class="t serif" style="left:752px;top:521px;width:273px;text-align:center;font-size:11.6px;color:#000;line-height:15px">Elbow 45°Ø 1 1/4&quot;, Muff</div><div class="t serif" style="left:1026px;top:521px;width:61px;text-align:center;font-size:11.7px;color:#000;line-height:15px">No.</div><div class="t serif" style="left:1088px;top:521px;width:140px;text-align:center;font-size:11.7px;color:#000;line-height:15px">0</div><div class="t serif" style="left:1229px;top:521px;width:88px;text-align:center;font-size:11.7px;color:#000;line-height:15px">1.8685</div><svg class="a" style="left:529px;top:511px" width="5" height="5" viewBox="0 0 5 5"><path d="M0 0H5L0 5z" fill="#008000"/></svg><div class="t serif" style="left:23px;top:556px;width:271px;text-align:center;font-size:11.5px;color:#000;line-height:15px">Hammodi Co. For Trade And Heating Ltd.</div><div class="t serif" style="left:295px;top:556px;width:116px;text-align:center;font-size:11.7px;color:#000;line-height:15px">001-120-036</div><div class="t serif" style="left:412px;top:556px;width:116px;text-align:center;font-size:11.5px;color:#000;line-height:15px">Mechanical</div><div class="t serif" style="left:529px;top:556px;width:116px;text-align:center;font-size:11.7px;color:#000;line-height:15px">1120036028</div><div class="t serif" style="left:646px;top:556px;width:105px;text-align:center;font-size:11.7px;color:#000;line-height:15px">NA</div><div class="t serif" style="left:752px;top:556px;width:273px;text-align:center;font-size:11.6px;color:#000;line-height:15px">Elbow 45° Ø 1&quot;, Muff</div><div class="t serif" style="left:1026px;top:556px;width:61px;text-align:center;font-size:11.7px;color:#000;line-height:15px">No.</div><div class="t serif" style="left:1088px;top:556px;width:140px;text-align:center;font-size:11.7px;color:#000;line-height:15px">0</div><div class="t serif" style="left:1229px;top:556px;width:88px;text-align:center;font-size:11.7px;color:#000;line-height:15px">1.0138</div><svg class="a" style="left:529px;top:546px" width="5" height="5" viewBox="0 0 5 5"><path d="M0 0H5L0 5z" fill="#008000"/></svg><div class="t serif" style="left:23px;top:591px;width:271px;text-align:center;font-size:11.5px;color:#000;line-height:15px">Hammodi Co. For Trade And Heating Ltd.</div><div class="t serif" style="left:295px;top:591px;width:116px;text-align:center;font-size:11.7px;color:#000;line-height:15px">001-120-036</div><div class="t serif" style="left:412px;top:591px;width:116px;text-align:center;font-size:11.5px;color:#000;line-height:15px">Mechanical</div><div class="t serif" style="left:529px;top:591px;width:116px;text-align:center;font-size:11.7px;color:#000;line-height:15px">1120036029</div><div class="t serif" style="left:646px;top:591px;width:105px;text-align:center;font-size:11.7px;color:#000;line-height:15px">NA</div><div class="t serif" style="left:752px;top:591px;width:273px;text-align:center;font-size:11.6px;color:#000;line-height:15px">Bell Reducer Ø 2&quot;x 1 1/4&quot;, Female Threaded</div><div class="t serif" style="left:1026px;top:591px;width:61px;text-align:center;font-size:11.7px;color:#000;line-height:15px">No.</div><div class="t serif" style="left:1088px;top:591px;width:140px;text-align:center;font-size:11.7px;color:#000;line-height:15px">0</div><div class="t serif" style="left:1229px;top:591px;width:88px;text-align:center;font-size:11.7px;color:#000;line-height:15px">1.8907</div><svg class="a" style="left:529px;top:581px" width="5" height="5" viewBox="0 0 5 5"><path d="M0 0H5L0 5z" fill="#008000"/></svg><div class="t serif" style="left:23px;top:626px;width:271px;text-align:center;font-size:11.5px;color:#000;line-height:15px">Hammodi Co. For Trade And Heating Ltd.</div><div class="t serif" style="left:295px;top:626px;width:116px;text-align:center;font-size:11.7px;color:#000;line-height:15px">001-120-036</div><div class="t serif" style="left:412px;top:626px;width:116px;text-align:center;font-size:11.5px;color:#000;line-height:15px">Mechanical</div><div class="t serif" style="left:529px;top:626px;width:116px;text-align:center;font-size:11.7px;color:#000;line-height:15px">1120036030</div><div class="t serif" style="left:646px;top:626px;width:105px;text-align:center;font-size:11.7px;color:#000;line-height:15px">NA</div><div class="t serif" style="left:752px;top:626px;width:273px;text-align:center;font-size:11.6px;color:#000;line-height:15px">Bell Reducer Ø 2&quot;x 1&quot;, Female Threaded</div><div class="t serif" style="left:1026px;top:626px;width:61px;text-align:center;font-size:11.7px;color:#000;line-height:15px">No.</div><div class="t serif" style="left:1088px;top:626px;width:140px;text-align:center;font-size:11.7px;color:#000;line-height:15px">0</div><div class="t serif" style="left:1229px;top:626px;width:88px;text-align:center;font-size:11.7px;color:#000;line-height:15px">1.8907</div><svg class="a" style="left:529px;top:616px" width="5" height="5" viewBox="0 0 5 5"><path d="M0 0H5L0 5z" fill="#008000"/></svg><div class="t serif" style="left:23px;top:661px;width:271px;text-align:center;font-size:11.5px;color:#000;line-height:15px">Hammodi Co. For Trade And Heating Ltd.</div><div class="t serif" style="left:295px;top:661px;width:116px;text-align:center;font-size:11.7px;color:#000;line-height:15px">001-120-036</div><div class="t serif" style="left:412px;top:661px;width:116px;text-align:center;font-size:11.5px;color:#000;line-height:15px">Mechanical</div><div class="t serif" style="left:529px;top:661px;width:116px;text-align:center;font-size:11.7px;color:#000;line-height:15px">1120036031</div><div class="t serif" style="left:646px;top:661px;width:105px;text-align:center;font-size:11.7px;color:#000;line-height:15px">NA</div><div class="t serif" style="left:752px;top:661px;width:273px;text-align:center;font-size:11.6px;color:#000;line-height:15px">Bell Reducer Ø 1 1/2&quot;x 1&quot;, Female Threaded</div><div class="t serif" style="left:1026px;top:661px;width:61px;text-align:center;font-size:11.7px;color:#000;line-height:15px">No.</div><div class="t serif" style="left:1088px;top:661px;width:140px;text-align:center;font-size:11.7px;color:#000;line-height:15px">0</div><div class="t serif" style="left:1229px;top:661px;width:88px;text-align:center;font-size:11.7px;color:#000;line-height:15px">1.1433</div><svg class="a" style="left:529px;top:651px" width="5" height="5" viewBox="0 0 5 5"><path d="M0 0H5L0 5z" fill="#008000"/></svg><div class="a" style="left:750px;top:123px;width:277px;height:72px;border:2px solid #217346;border-bottom:none"></div><div class="a" style="left:752px;top:125px;width:273px;height:70px;border:1px solid #fff;border-bottom:none"></div><div class="a" style="left:1023px;top:193px;width:5px;height:2px;background:#217346"></div><div class="a" style="left:1345px;top:111px;width:21px;height:568px;background:#e6e6e6"></div><div class="a" style="left:1348px;top:128px;width:15px;height:535px;background:#dadada"></div><div class="a" style="left:1348px;top:113px;width:15px;height:15px;background:#fff;border:1px solid #a6a6a6"></div><svg class="a" style="left:1351px;top:118px" width="9" height="5" viewBox="0 0 9 5"><path d="M4.5 0L9 5H0z" fill="#505a5f"/></svg><div class="a" style="left:1348px;top:141px;width:15px;height:158px;background:#fff;border:1px solid #a6a6a6"></div><div class="a" style="left:1348px;top:663px;width:15px;height:15px;background:#fff;border:1px solid #a6a6a6"></div><svg class="a" style="left:1351px;top:668px" width="9" height="5" viewBox="0 0 9 5"><path d="M0 0H9L4.5 5z" fill="#505a5f"/></svg><div class="a" style="left:0;top:678px;width:1345px;height:1px;background:#9b9b9b"></div><div class="a" style="left:0;top:679px;width:1366px;height:27px;background:#e6e6e6"></div><div class="a" style="left:0;top:706px;width:1366px;height:1px;background:#c8c8c8"></div><svg class="a" style="left:27px;top:688px" width="5" height="8" viewBox="0 0 5 8"><path d="M5 0V8L0 4z" fill="#217346"/></svg><svg class="a" style="left:56px;top:688px" width="5" height="8" viewBox="0 0 5 8"><path d="M0 0V8L5 4z" fill="#217346"/></svg><div class="t" style="left:80px;top:684px;font-size:14px;font-weight:bold;color:#217346;letter-spacing:0.2px">...</div><div class="a" style="left:100px;top:683px;width:1px;height:18px;background:#a6a6a6"></div><div class="t" style="left:101px;top:684px;width:96px;text-align:center;font-size:12.8px;color:#444">001-120-015</div><div class="a" style="left:197px;top:683px;width:1px;height:18px;background:#a6a6a6"></div><div class="t" style="left:198px;top:684px;width:96px;text-align:center;font-size:12.8px;color:#444">001-120-021</div><div class="a" style="left:294px;top:683px;width:1px;height:18px;background:#a6a6a6"></div><div class="t" style="left:295px;top:684px;width:96px;text-align:center;font-size:12.8px;color:#444">001-120-022</div><div class="a" style="left:391px;top:683px;width:1px;height:18px;background:#a6a6a6"></div><div class="t" style="left:392px;top:684px;width:96px;text-align:center;font-size:12.8px;color:#444">001-120-025</div><div class="a" style="left:488px;top:683px;width:1px;height:18px;background:#a6a6a6"></div><div class="t" style="left:489px;top:684px;width:96px;text-align:center;font-size:12.8px;color:#444">001-120-027</div><div class="a" style="left:585px;top:683px;width:1px;height:18px;background:#a6a6a6"></div><div class="t" style="left:586px;top:684px;width:96px;text-align:center;font-size:12.8px;color:#444">001-120-028</div><div class="a" style="left:682px;top:683px;width:1px;height:18px;background:#a6a6a6"></div><div class="t" style="left:683px;top:684px;width:96px;text-align:center;font-size:12.8px;color:#444">001-120-029</div><div class="a" style="left:779px;top:683px;width:1px;height:18px;background:#a6a6a6"></div><div class="t" style="left:780px;top:684px;width:96px;text-align:center;font-size:12.8px;color:#444">001-120-031</div><div class="a" style="left:876px;top:678px;width:98px;height:25px;background:#fff;border:1px solid #a6a6a6;border-bottom:none"></div><div class="a" style="left:876px;top:701px;width:98px;height:2px;background:#217346"></div><div class="t" style="left:877px;top:684px;width:96px;text-align:center;font-size:13px;font-weight:bold;color:#217346">001-120-036</div><div class="t" style="left:985px;top:684px;font-size:12.8px;color:#444">001-120-037</div><div class="a" style="left:1070px;top:683px;width:1px;height:18px;background:#a6a6a6"></div><div class="a" style="left:1081px;top:679px;width:57px;height:27px;overflow:hidden"><div class="t" style="left:1px;top:5px;font-size:12.8px;color:#444">001-120-038</div></div><div class="t" style="left:1143px;top:683px;font-size:14px;font-weight:bold;color:#217346;letter-spacing:1px">...</div><svg class="a" style="left:1169px;top:683px" width="18" height="18" viewBox="0 0 18 18"><circle cx="9" cy="9" r="7.5" fill="none" stroke="#777" stroke-width="1.2"/><path d="M9 4.5V13.5M4.5 9H13.5" stroke="#777" stroke-width="1.6"/></svg><div class="a" style="left:1206px;top:687px;width:2px;height:2px;background:#aaa"></div><div class="a" style="left:1206px;top:691px;width:2px;height:2px;background:#aaa"></div><div class="a" style="left:1206px;top:695px;width:2px;height:2px;background:#aaa"></div><div class="a" style="left:1223px;top:685px;width:119px;height:15px;background:#dadada"></div><div class="a" style="left:1223px;top:685px;width:15px;height:15px;background:#fff;border:1px solid #a6a6a6"></div><svg class="a" style="left:1228px;top:688px" width="5" height="9" viewBox="0 0 5 9"><path d="M5 0V9L0 4.5z" fill="#505a5f"/></svg><div class="a" style="left:1238px;top:685px;width:17px;height:15px;background:#fff;border:1px solid #a6a6a6"></div><div class="a" style="left:1327px;top:685px;width:15px;height:15px;background:#fff;border:1px solid #a6a6a6"></div><svg class="a" style="left:1332px;top:688px" width="5" height="9" viewBox="0 0 5 9"><path d="M0 0V9L5 4.5z" fill="#505a5f"/></svg><div class="a" style="left:0;top:707px;width:1366px;height:21px;background:#f3f2f1"></div><div class="t" style="left:7px;top:712px;font-size:11.5px;color:#444">Ready</div><div class="t" style="left:55px;top:712px;font-size:11.5px;color:#444">157 of 888 records found</div><svg class="a" style="left:202px;top:710px" width="16" height="15" viewBox="0 0 16 15">
<rect x="0.5" y="1.5" width="12" height="11" fill="none" stroke="#555" stroke-width="1"/><path d="M0.5 4.5h12M3 7h4M3 9.5h3" stroke="#555"/>
<circle cx="11" cy="10" r="3.5" fill="#f3f2f1" stroke="#555"/><circle cx="11" cy="10" r="1.2" fill="#555"/>
</svg><div class="a" style="left:1072px;top:707px;width:40px;height:21px;background:#d2d2d2"></div><svg class="a" style="left:1085px;top:710px" width="14" height="14" viewBox="0 0 14 14">
<path d="M0.5 0.5h13v13h-13z M0.5 5h13 M0.5 9.2h13 M5 0.5v13 M9.2 0.5v13" fill="none" stroke="#444" stroke-width="1"/>
</svg><svg class="a" style="left:1125px;top:710px" width="14" height="14" viewBox="0 0 14 14">
<rect x="0.5" y="0.5" width="13" height="13" fill="none" stroke="#444"/><rect x="3.5" y="3" width="7" height="8" fill="none" stroke="#444"/><path d="M5 5.5h4M5 7.5h4" stroke="#444"/>
</svg><svg class="a" style="left:1165px;top:710px" width="14" height="14" viewBox="0 0 14 14">
<path d="M0.5 13.5V0.5h13v13z M0.5 9.5h7v-9 M4 0.5v5" fill="none" stroke="#444"/>
</svg><div class="a" style="left:1198px;top:717px;width:8px;height:1px;background:#555"></div><div class="a" style="left:1211px;top:717px;width:100px;height:1px;background:#555"></div><div class="a" style="left:1261px;top:714px;width:1px;height:6px;background:#555"></div><div class="a" style="left:1243px;top:711px;width:5px;height:12px;background:#7a7a7a"></div><div class="a" style="left:1315px;top:717px;width:9px;height:1px;background:#555"></div><div class="a" style="left:1319px;top:713px;width:1px;height:9px;background:#555"></div><div class="t" style="left:1337px;top:712px;font-size:11.5px;color:#444">70%</div><div class="a" style="left:0;top:728px;width:1366px;height:40px;background:linear-gradient(90deg,#223840 0%,#223840 33%,#1f303e 62%,#1c2944 100%)"></div><svg class="a" style="left:16px;top:741px" width="16" height="16" viewBox="0 0 16 16">
<path d="M0 2.2L6.5 1.3V7.5H0z M7.5 1.1L16 0V7.5H7.5z M0 8.5H6.5V14.7L0 13.8z M7.5 8.5H16V16L7.5 14.9z" fill="#fff"/>
</svg><svg class="a" style="left:63px;top:740px" width="18" height="17" viewBox="0 0 18 17">
<circle cx="11" cy="6.5" r="5.3" fill="none" stroke="#fff" stroke-width="1.4"/><path d="M7.2 10.3L1 16.3" stroke="#fff" stroke-width="1.5"/>
</svg><svg class="a" style="left:111px;top:740px" width="17" height="17" viewBox="0 0 17 17"><circle cx="8.5" cy="8.5" r="6.6" fill="none" stroke="#fff" stroke-width="2.2"/></svg><svg class="a" style="left:159px;top:737px" width="24" height="22" viewBox="0 0 24 22">
<path d="M1 12 C4 5 11 1 19 2 C21 7 21 15 18 20 C11 22 4 18 1 12z" fill="#e07a55"/>
<path d="M6 7 L11 19 M10 4 L15 19 M14 3 L18 15" stroke="#f2c230" stroke-width="2.2"/>
<path d="M8 5 L13 19 M12 3 L17 17" stroke="#d860a0" stroke-width="1"/>
<path d="M19 9 L22 7 L22 14 L19 12z" fill="#e8e0c0"/>
</svg><svg class="a" style="left:208px;top:736px" width="34" height="26" viewBox="0 0 34 26">
<path d="M1 9 L12 1.5 L23 9z" fill="#0c5fbf"/>
<rect x="1" y="9" width="22" height="12" fill="#3c9ff0"/>
<path d="M2.5 9 H21.5 L12 15z" fill="#f0f0f0"/>
<circle cx="25.5" cy="18" r="7" fill="#223840" stroke="#bfc6c9" stroke-width="1"/>
<path d="M23 14.5 V21.5 M26.3 14.5 Q27 21.5 27.7 21.5 Q28.5 21.5 29.3 14.5" stroke="#fff" stroke-width="1.3" fill="none"/>
</svg><svg class="a" style="left:256px;top:737px" width="26" height="22" viewBox="0 0 26 22">
<path d="M12 1 L25 4 V15 L12 12z" fill="#5ab6f0"/>
<path d="M12 1 L12 12 L25 15" fill="none" stroke="#bde3fb" stroke-width="0.8"/>
<path d="M1 17 L12 15 L18 19 L7 21z" fill="#cdd3d6"/>
<path d="M17 15 L24 16 L22 19 L16 18z" fill="#e2e6e8"/>
</svg><div class="a" style="left:306px;top:736px;width:24px;height:24px;background:#000"></div><svg class="a" style="left:312px;top:739px" width="12" height="18" viewBox="0 0 12 18"><path d="M1 0H4L8 11V0H11V18H8L4 7V18H1z" fill="#e50914"/></svg><svg class="a" style="left:354px;top:735px" width="25" height="26" viewBox="0 0 25 26">
<path d="M7.5 8 V4 a5 3 0 0 1 10 0 V8" fill="none" stroke="#f2f2f2" stroke-width="1.6"/>
<rect x="1" y="8" width="23" height="17" fill="#f4f4f4"/>
<rect x="8" y="12" width="4" height="4" fill="#f25022"/><rect x="13" y="12" width="4" height="4" fill="#7f7f00"/>
<rect x="8" y="17" width="4" height="4" fill="#00a4ef"/><rect x="13" y="17" width="4" height="4" fill="#ffb900"/>
</svg><svg class="a" style="left:403px;top:736px" width="26" height="25" viewBox="0 0 26 25">
<circle cx="13" cy="12.5" r="12" fill="#1b8ad6"/>
<path d="M25 12.5 C25 6 19 1 13 1 C7 1 2 5 1.2 11 C3 6 8 5 12 7 C17 9 17 14 13 15 C18 18 24 17 25 12.5z" fill="#4ccc6a"/>
<path d="M13 15 C9 15 7 12 9 9 C5 11 5 18 10 21 C14 24 20 23 23 19 C19 20 15 18 13 15z" fill="#0f5fae"/>
</svg><svg class="a" style="left:453px;top:739px" width="24" height="20" viewBox="0 0 24 20">
<path d="M0 1 H8 L10 3 H23 V19 H0z" fill="#f5c451"/>
<rect x="0" y="5" width="23" height="14" fill="#ffd867"/>
<path d="M6 19 V12 H17 V19 H14 V15 H9 V19z" fill="#2f8ee0"/>
</svg><svg class="a" style="left:502px;top:737px" width="25" height="22" viewBox="0 0 25 22">
<rect x="6" y="0" width="18" height="22" rx="1" fill="#2b7cd3"/>
<rect x="6" y="0" width="18" height="6" fill="#41a5ee"/>
<rect x="0" y="5" width="13" height="13" fill="#185abd"/>
<path d="M2.5 8 L4 15 L6.5 9.5 L9 15 L10.5 8" fill="none" stroke="#fff" stroke-width="1.4"/>
</svg><div class="a" style="left:539px;top:728px;width:48px;height:40px;background:#4e5d65"></div><svg class="a" style="left:550px;top:737px" width="26" height="22" viewBox="0 0 26 22">
<rect x="6" y="0" width="19" height="22" rx="1" fill="#21a366"/>
<rect x="6" y="0" width="19" height="7" fill="#33c481"/>
<rect x="6" y="14" width="19" height="8" fill="#107c41"/>
<rect x="0" y="5" width="13" height="13" fill="#185c37"/>
<path d="M3.5 8 L9.5 15 M9.5 8 L3.5 15" stroke="#fff" stroke-width="1.6"/>
</svg><svg class="a" style="left:600px;top:736px" width="25" height="25" viewBox="0 0 25 25">
<ellipse cx="16" cy="4" rx="8" ry="3" fill="#e07070"/>
<rect x="8" y="4" width="16" height="18" fill="#c4314b"/>
<ellipse cx="16" cy="22" rx="8" ry="3" fill="#a4262c"/>
<rect x="0" y="8" width="13" height="13" fill="#a4373a"/>
<path d="M3 18.5 L6.5 10 L10 18.5 M4.5 15.5 H8.5" fill="none" stroke="#fff" stroke-width="1.4"/>
</svg><svg class="a" style="left:649px;top:736px" width="24" height="24" viewBox="0 0 24 24">
<circle cx="12" cy="12" r="11.5" fill="#db4437"/>
<path d="M12 12 L2 17.7 A11.5 11.5 0 0 0 17.7 22 z" fill="#0f9d58"/>
<path d="M12 12 L23.5 12 A11.5 11.5 0 0 1 12 23.5 L2 17.7z" fill="#0f9d58"/>
<path d="M12 12 L22 6.3 A11.5 11.5 0 0 1 12 23.5z" fill="#ffcd40"/>
<circle cx="12" cy="12" r="5" fill="#fff"/><circle cx="12" cy="12" r="3.8" fill="#4285f4"/>
</svg><svg class="a" style="left:698px;top:736px" width="25" height="25" viewBox="0 0 25 25">
<defs><linearGradient id="mg" x1="0" y1="1" x2="1" y2="0"><stop offset="0" stop-color="#5f5cf0"/><stop offset="0.5" stop-color="#a055f0"/><stop offset="1" stop-color="#f27a8a"/></linearGradient></defs>
<path d="M12.5 1 C6 1 1 5.8 1 11.8 C1 15 2.5 17.8 4.8 19.6 V24 L9 21.7 C10.1 22 11.3 22.2 12.5 22.2 C19 22.2 24 17.5 24 11.6 C24 5.8 19 1 12.5 1z" fill="url(#mg)"/>
<path d="M5.5 15 L10.5 9.5 L13.5 12.5 L19.5 8 L14.5 14 L11.5 11 z" fill="#fff"/>
</svg><svg class="a" style="left:746px;top:736px" width="26" height="24" viewBox="0 0 26 24">
<rect x="2" y="1" width="22" height="15" fill="#dfe6ea"/>
<rect x="4" y="3" width="18" height="11" fill="#3d8fd8"/>
<path d="M5 6h16M5 9h16" stroke="#bfe0fb" stroke-width="1.2" stroke-dasharray="1.5 1"/>
<rect x="11" y="16" width="4" height="4" fill="#c8cfd3"/>
<ellipse cx="13" cy="21.5" rx="6" ry="2" fill="#d5dadd"/>
</svg><svg class="a" style="left:797px;top:737px" width="23" height="23" viewBox="0 0 23 23">
<rect x="0" y="0" width="23" height="23" fill="#2f9ae6"/>
<path d="M0 23 V15 L8 8 L23 20 V23z" fill="#1a4e8c"/>
<path d="M8 15 L15 10 L23 16 V23 H4z" fill="#2765b0"/>
<circle cx="16" cy="6" r="2.2" fill="#fff"/>
</svg><div class="a" style="left:298px;top:766px;width:40px;height:2px;background:#76b9ed"></div><div class="a" style="left:445px;top:766px;width:38px;height:2px;background:#76b9ed"></div><div class="a" style="left:478px;top:766px;width:9px;height:2px;background:#76b9ed"></div><div class="a" style="left:539px;top:766px;width:48px;height:2px;background:#76b9ed"></div><div class="a" style="left:641px;top:766px;width:40px;height:2px;background:#76b9ed"></div><div class="a" style="left:788px;top:766px;width:40px;height:2px;background:#76b9ed"></div><svg class="a" style="left:910px;top:739px" width="17" height="17" viewBox="0 0 17 17">
<circle cx="11.5" cy="4" r="2.6" fill="none" stroke="#fff" stroke-width="1.2"/><path d="M7.5 11 C8 7.5 15 7.5 15.8 11" fill="none" stroke="#fff" stroke-width="1.2"/>
<circle cx="5" cy="9.5" r="2.6" fill="none" stroke="#fff" stroke-width="1.2"/><path d="M1 16.5 C1.5 13 8.5 13 9 16.5" fill="none" stroke="#fff" stroke-width="1.2"/>
</svg><svg class="a" style="left:1031px;top:738px" width="22" height="20" viewBox="0 0 22 20">
<defs><mask id="mm"><rect width="22" height="20" fill="#fff"/><circle cx="6.5" cy="4" r="8" fill="#000"/></mask></defs>
<circle cx="11" cy="10" r="9" fill="#fcc419" mask="url(#mm)"/>
</svg><div class="t" style="left:1062px;top:741px;font-size:14px;color:#fff;letter-spacing:-0.1px">17°C &nbsp;Clear</div><svg class="a" style="left:1147px;top:743px" width="14" height="9" viewBox="0 0 14 9"><path d="M1 8L7 2L13 8" fill="none" stroke="#fff" stroke-width="1.3"/></svg><svg class="a" style="left:1169px;top:741px" width="18" height="13" viewBox="0 0 18 13"><path d="M4 12 H15 A3 3 0 0 0 15 6 A5 5 0 0 0 6 4.5 A4 4 0 0 0 4 12z" fill="#dfe3e6"/></svg><svg class="a" style="left:1193px;top:740px" width="18" height="16" viewBox="0 0 18 16">
<path d="M2.5 1V4 M5.5 1V4 M1 4H7V7 A3 3 0 0 1 1 7z M4 10V15" fill="none" stroke="#fff" stroke-width="1.1"/>
<rect x="8.5" y="5.5" width="8" height="7" fill="none" stroke="#fff" stroke-width="1"/>
<path d="M10.5 7 L14.5 11 M14.5 7 L10.5 11" stroke="#fff" stroke-width="1"/>
</svg><div class="t" style="left:1220px;top:742px;font-size:12px;color:#fff;letter-spacing:0.2px">ENG</div><div class="t" style="left:1262px;top:732px;font-size:12.4px;color:#fff;letter-spacing:-0.7px">09:30</div><svg class="a" style="left:1292px;top:739px" width="8" height="8" viewBox="0 0 8 8"><path d="M1.2 7.5 V4.6 H6 A1.9 1.9 0 1 0 3.4 3" fill="none" stroke="#fff" stroke-width="1.3"/></svg><svg class="a" style="left:1257px;top:752px" width="50" height="10" viewBox="0 0 50 10">
<g fill="none" stroke="#fff" stroke-width="1.2">
<path d="M0.6 0.5 Q1.5 2.5 4.5 1.2 M1.6 1.8 V9.5"/>
<path d="M11 0.5 Q12 2.5 15 1.2 M12 1.8 V9.5"/>
<path d="M18.2 0.5 V9.5"/>
<path d="M26 0.3 L20.5 9.7"/>
<path d="M27.8 0.5 V9.5 M30.8 0.5 V9.5"/>
<path d="M37.5 0.3 L32.3 9.7"/>
<path d="M41.8 0.5 Q42.5 2.6 44.2 1.5 Q45.3 2.8 47.5 0.8 M42.2 1.8 V9.5"/>
</g>
<circle cx="8" cy="5.3" r="1.3" fill="#fff"/><circle cx="38.5" cy="5.3" r="1.3" fill="#fff"/>
</svg><svg class="a" style="left:1323px;top:737px" width="30" height="26" viewBox="0 0 30 26">
<path d="M2 1H21V13H8L4 17V13H2z" fill="#fff"/>
<path d="M5 4.5H18M5 7.5H18M5 10.5H14" stroke="#1c2b42" stroke-width="1"/>
<circle cx="19" cy="15" r="9" fill="#2a3645" stroke="#c7ccd1" stroke-width="1.2"/>
<path d="M13.5 11 Q15 13 17.5 11 M17 11 V20 M20 11 Q22 20 22.5 20 Q23 20 25 11" fill="none" stroke="#fff" stroke-width="1.3"/>
</svg><div class="a" style="left:1362px;top:728px;width:1px;height:40px;background:#5a6570"></div><svg class="a" style="left:590px;top:672px" width="190" height="90" viewBox="590 672 190 90">
<g opacity="0.24">
<g fill="none" stroke="#9f9f9f" stroke-width="7" stroke-linecap="round">
<path d="M628 679 V716 Q628 720 632 720 H749"/>
<circle cx="616.5" cy="709" r="10.5"/>
<circle cx="658" cy="707" r="7.5"/>
<path d="M673 712 V700 M693.5 712 V699 M712.5 712 V699 M731.5 712 V699"/>
<circle cx="749" cy="709" r="11"/>
</g>
<g fill="#9f9f9f">
<circle cx="650" cy="682" r="4"/><circle cx="662.5" cy="682" r="4"/>
<circle cx="677" cy="691.5" r="4"/><circle cx="689.5" cy="691.5" r="4"/>
</g>
</g>
<text x="600" y="746" opacity="0.4" font-family="Liberation Sans" font-weight="bold" font-size="26" letter-spacing="0.3" fill="#9f9f9f">mostaql.com</text>
</svg></body></html>
